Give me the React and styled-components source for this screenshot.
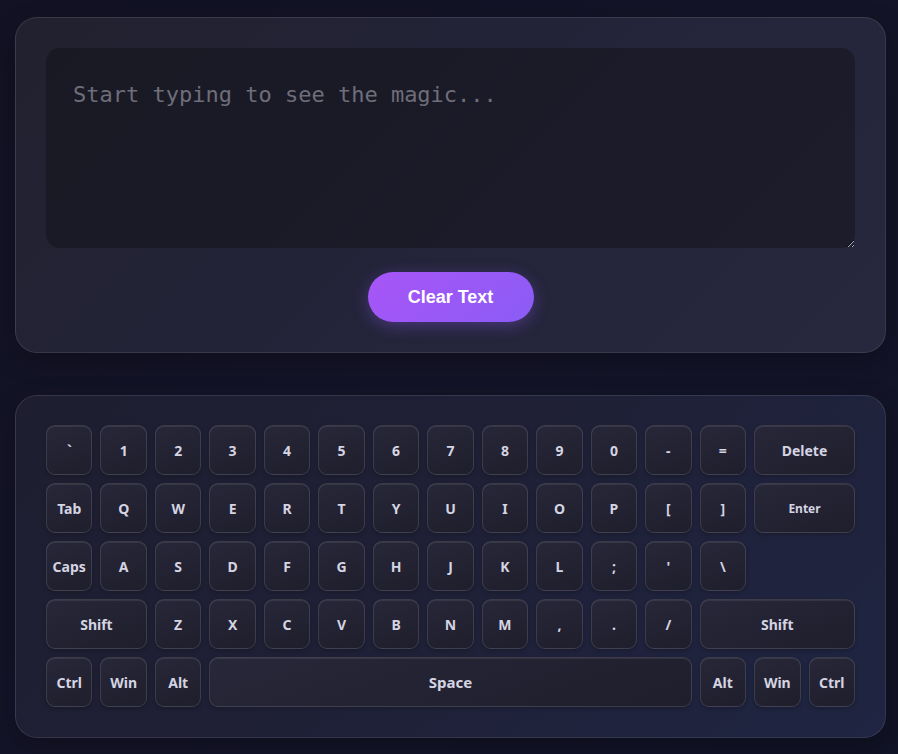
import React, { useState } from 'react';
import styled, { createGlobalStyle } from 'styled-components';

const GlobalStyle = createGlobalStyle`
  html, body {
    margin: 0;
    padding: 0;
    min-height: 100%;
  }
  body {
    background: linear-gradient(135deg, #121224 0%, #141428 50%, #111326 100%);
    min-height: 754px;
    font-family: 'Noto Sans', 'Open Sans', sans-serif;
  }
`;

const Page = styled.div`
  padding: 17px 12px 17px 15px;
  display: flex;
  flex-direction: column;
  gap: 42px;
`;

const Panel = styled.div`
  border: 1px solid rgba(255, 255, 255, 0.1);
  border-radius: 22px;
  padding: 30px;
  background: ${(p) =>
    p.$blue
      ? 'linear-gradient(135deg, #1e1e30 0%, #1f2036 45%, #1f2542 100%)'
      : 'linear-gradient(135deg, #21212f 0%, #24243a 55%, #27273d 100%)'};
  box-shadow: 0 8px 24px rgba(0, 0, 0, 0.25);
  display: flex;
  flex-direction: column;
  align-items: center;
`;

const TextArea = styled.textarea`
  box-sizing: border-box;
  width: 100%;
  height: 200px;
  border: none;
  border-radius: 14px;
  background: rgba(20, 20, 28, 0.55);
  color: #e0e0ea;
  padding: 36px 27px 20px;
  font-family: 'DejaVu Sans Mono', 'Liberation Mono', monospace;
  font-size: 22px;
  line-height: 1;
  outline: none;
  resize: vertical;
  &::placeholder {
    color: #6e6e7a;
  }
`;

const ClearButton = styled.button`
  margin-top: 24px;
  width: 166px;
  height: 50px;
  border: none;
  border-radius: 25px;
  background: linear-gradient(135deg, #a855f7 0%, #8b5cf6 100%);
  color: #fff;
  font-family: 'Liberation Sans', Arial, sans-serif;
  font-weight: 700;
  font-size: 18px;
  cursor: pointer;
  box-shadow: 0 4px 16px rgba(139, 92, 246, 0.35);
`;

const Board = styled.div`
  width: 100%;
  display: flex;
  flex-direction: column;
  gap: 8px;
  margin-top: -1px;
`;

const KeyRow = styled.div`
  display: grid;
  grid-template-columns: repeat(15, 1fr);
  height: 50px;
  gap: 8px;
`;

const Key = styled.div`
  grid-column: span ${(p) => p.$span || 1};
  box-sizing: border-box;
  display: flex;
  align-items: center;
  justify-content: center;
  border: 1px solid rgba(255, 255, 255, 0.12);
  border-radius: 9px;
  background: linear-gradient(160deg, #282739 0%, #1f1e2c 100%);
  box-shadow: inset 0 1px 0 rgba(255, 255, 255, 0.08), 0 2px 4px rgba(0, 0, 0, 0.2);
  color: #d4d4e2;
  font-family: 'Noto Sans', 'Open Sans', sans-serif;
  font-weight: 700;
  font-size: ${(p) => p.$size || 14}px;
  user-select: none;
`;

const rows = [
  [['`'], ['1'], ['2'], ['3'], ['4'], ['5'], ['6'], ['7'], ['8'], ['9'], ['0'], ['-'], ['='], ['Delete', 2]],
  [['Tab'], ['Q'], ['W'], ['E'], ['R'], ['T'], ['Y'], ['U'], ['I'], ['O'], ['P'], ['['], [']'], ['Enter', 2, 12]],
  [['Caps'], ['A'], ['S'], ['D'], ['F'], ['G'], ['H'], ['J'], ['K'], ['L'], [';'], ["'"], ['\\']],
  [['Shift', 2], ['Z'], ['X'], ['C'], ['V'], ['B'], ['N'], ['M'], [','], ['.'], ['/'], ['Shift', 3]],
  [['Ctrl'], ['Win'], ['Alt'], ['Space', 9, 15], ['Alt'], ['Win'], ['Ctrl']],
];

export default function App() {
  const [text, setText] = useState('');
  return (
    <>
      <GlobalStyle />
      <Page>
        <Panel>
          <TextArea
            value={text}
            onChange={(e) => setText(e.target.value)}
            placeholder="Start typing to see the magic..."
          />
          <ClearButton onClick={() => setText('')}>Clear Text</ClearButton>
        </Panel>
        <Panel $blue>
          <Board>
            {rows.map((row, i) => (
              <KeyRow key={i}>
                {row.map(([label, span, size], j) => (
                  <Key key={j} $span={span} $size={size}>
                    {label}
                  </Key>
                ))}
              </KeyRow>
            ))}
          </Board>
        </Panel>
      </Page>
    </>
  );
}
